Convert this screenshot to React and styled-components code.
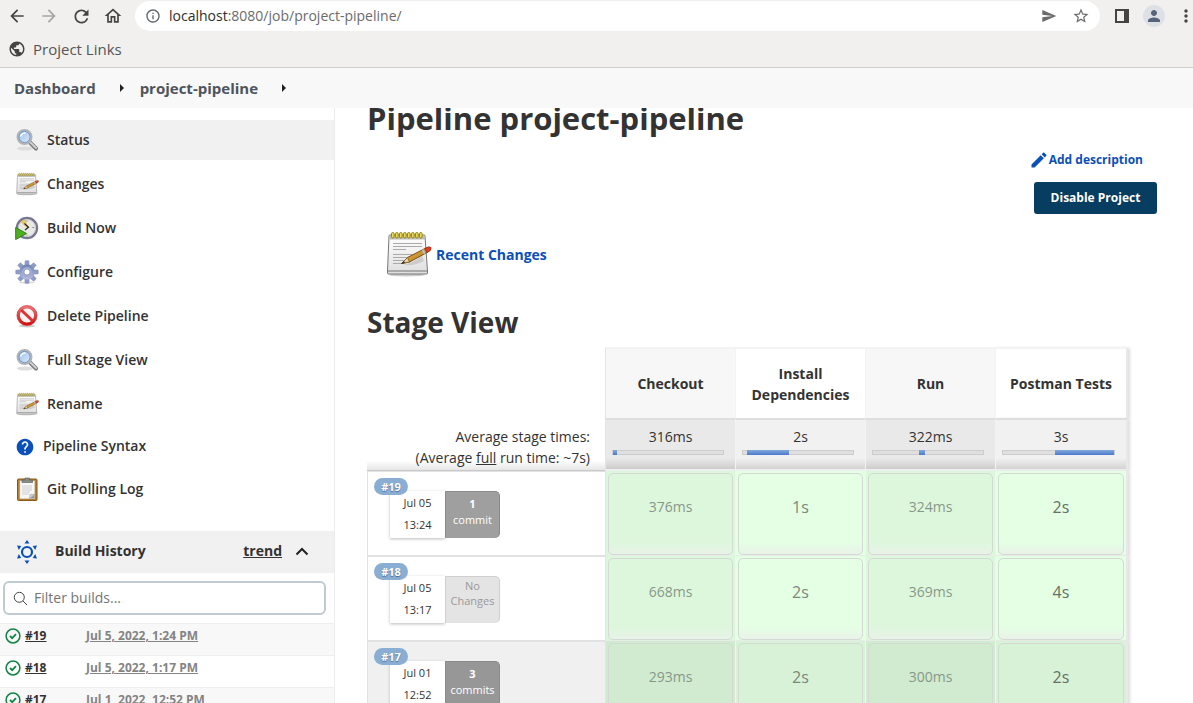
import React from 'react';
import styled, { createGlobalStyle, css } from 'styled-components';
import {
  MdArrowBack,
  MdArrowForward,
  MdRefresh,
  MdOutlineHome,
  MdInfoOutline,
  MdSend,
  MdStarBorder,
  MdPerson,
  MdMoreVert,
  MdPublic,
  MdEdit,
  MdHelp,
} from 'react-icons/md';

const GlobalStyle = createGlobalStyle`
  *, *::before, *::after { box-sizing: border-box; }
  body {
    margin: 0;
    font-family: "Open Sans", "Noto Sans", sans-serif;
    font-size: 14px;
    color: #333;
    background: #fff;
  }
  a { color: inherit; text-decoration: none; }
  button, input { font: inherit; color: inherit; }
  svg { display: block; flex: none; }
`;

const Screen = styled.div`
  display: flex;
  flex-direction: column;
  height: 100vh;
  overflow: hidden;
`;

/* Browser chrome */

const BrowserBar = styled.header`
  flex: none;
  background: #f1f0ee;
  border-bottom: 1px solid #cfcfca;
`;

const Toolbar = styled.div`
  display: flex;
  align-items: center;
  height: 32px;
`;

const NavButtons = styled.nav`
  display: flex;
  flex: none;
  gap: 8px;
  padding: 0 10px 0 5px;
`;

const IconButton = styled.button`
  display: flex;
  align-items: center;
  justify-content: center;
  flex: none;
  width: 24px;
  height: 24px;
  padding: 0;
  border: 0;
  background: none;
  color: ${(p) => (p.$muted ? '#a5a5a3' : p.$soft ? '#6b6b6b' : '#444')};
`;

const AddressBar = styled.div`
  display: flex;
  align-items: center;
  flex: 1;
  gap: 8px;
  height: 30px;
  padding: 0 7px 0 10px;
  border-radius: 15px;
  background: #fff;
  color: #5f6368;
`;

const Url = styled.a`
  flex: 1;
  padding-bottom: 2px;
  font-size: 14px;
  color: #6b6b6b;
  white-space: nowrap;
`;

const Host = styled.span`
  color: #2d2d2d;
`;

const BarActions = styled.div`
  display: flex;
  align-items: center;
  flex: none;
  gap: 9px;
  padding-left: 10px;
  margin-right: -5px;
`;

const Avatar = styled.button`
  display: flex;
  align-items: center;
  justify-content: center;
  width: 22px;
  height: 22px;
  padding: 0;
  border: 0;
  border-radius: 50%;
  background: #dde1e6;
  color: #56637a;
`;

const Bookmarks = styled.div`
  display: flex;
  align-items: center;
  height: 35px;
  padding: 0 8px 2px;
`;

const Bookmark = styled.a`
  display: flex;
  align-items: center;
  gap: 7px;
  font-size: 15px;
  line-height: 18px;
  color: #555;
`;

/* Jenkins page */

const Breadcrumbs = styled.nav`
  display: flex;
  align-items: center;
  flex: none;
  gap: 16px;
  height: 40px;
  padding: 0 14px;
  background: #f8f8f8;
  font-size: 15px;
  font-weight: 700;
  color: #4d545d;
`;

const CrumbArrow = styled.span`
  width: 12px;
  &::before {
    content: '';
    display: block;
    margin-left: 8px;
    width: 0;
    border: solid transparent;
    border-width: 4px 0 4px 4px;
    border-left-color: #222;
  }
`;

const Page = styled.div`
  display: flex;
  flex: 1;
  min-height: 0;
`;

const Sidebar = styled.aside`
  flex: none;
  width: 335px;
  padding-top: 12px;
  border-right: 1px solid #ececec;
`;

const Tasks = styled.nav`
  display: flex;
  flex-direction: column;
  gap: 4px;
  padding-bottom: 22px;
`;

const Task = styled.a`
  display: flex;
  align-items: center;
  gap: 8px;
  height: ${(p) => (p.$small ? '37px' : '40px')};
  padding-left: 15px;
  background: ${(p) => (p.$active ? '#f1f1f1' : 'none')};
  font-size: 14px;
  font-weight: 600;
`;

const TaskLabel = styled.span`
  padding-bottom: 2px;
`;

const HistoryHeader = styled.div`
  display: flex;
  align-items: center;
  height: 42px;
  padding: 0 20px 0 15px;
  background: #f1f1f1;
  font-weight: 700;
`;

const HistoryTitle = styled.span`
  flex: 1;
  padding: 0 0 4px 16px;
`;

const Trend = styled.a`
  padding: 0 8px 4px 0;
  text-decoration: underline;
`;

const FilterBox = styled.label`
  display: flex;
  align-items: center;
  gap: 6px;
  height: 34px;
  margin: 8px 8px 8px 3px;
  padding: 0 8px;
  border: 2px solid #bfcbd0;
  border-radius: 6px;
`;

const FilterInput = styled.input`
  flex: 1;
  min-width: 0;
  padding: 0 0 2px;
  border: 0;
  outline: 0;
  background: none;
  font-size: 14px;
  &::placeholder { color: #757575; opacity: 1; }
`;

const BuildRow = styled.div`
  display: grid;
  grid-template-columns: 20px 61px 1fr;
  height: 32px;
  padding: 4px 0 0 5px;
  border-top: 1px solid #efefef;
  background: ${(p) => (p.$odd ? '#f8f8f8' : '#fff')};
  font-size: 12px;
  font-weight: 700;
  line-height: 16px;
`;

const BuildLink = styled.a`
  color: ${(p) => (p.$soft ? '#848484' : '#333')};
  text-decoration: underline;
`;

const Main = styled.main`
  display: flex;
  flex-direction: column;
  flex: 1;
  min-width: 0;
  overflow: hidden;
  padding: 0 36px 0 32px;
`;

const Title = styled.h1`
  flex: none;
  margin: 0;
  font-size: 31px;
  line-height: 20px;
  font-weight: 700;
`;

const Actions = styled.div`
  display: flex;
  flex-direction: column;
  align-items: flex-end;
  flex: none;
  gap: 12px;
  padding-top: 22px;
`;

const EditLink = styled.a`
  display: flex;
  align-items: center;
  padding-right: 14px;
  font-size: 12px;
  line-height: 20px;
  font-weight: 700;
  color: #0b4fb8;
`;

const DisableButton = styled.button`
  min-width: 123px;
  height: 32px;
  padding: 0 16px 2px;
  border: 0;
  border-radius: 3px;
  background: #073d60;
  color: #fff;
  font-size: 12px;
  font-weight: 700;
`;

const RecentChanges = styled.a`
  display: flex;
  align-items: center;
  flex: none;
  align-self: flex-start;
  gap: 4px;
  margin: 16px 0 0 17px;
  font-weight: 700;
  color: #0b4fb8;
`;

const SectionTitle = styled.h2`
  flex: none;
  margin: 28px 0 9px;
  font-size: 28px;
  line-height: 32px;
  font-weight: 700;
`;

const StageTable = styled.table`
  flex: none;
  align-self: flex-start;
  table-layout: fixed;
  width: 761px;
  border-collapse: separate;
  border-spacing: 0;
  td, th { padding: 0; }
`;

const InfoCol = styled.col`
  width: 238px;
`;

const StageCol = styled.col`
  width: ${(p) => (p.$last ? '133px' : '130px')};
`;

const Corner = styled.td`
  height: 71px;
`;

const stageEdges = css`
  border-left: 1px solid ${(p) => (p.$first ? '#e4e4e4' : '#f3f3f3')};
  ${(p) => p.$last && 'border-right: 2px solid #e8e8e8;'}
  ${(p) => p.$last && 'box-shadow: 2px 1px 3px #ddd;'}
`;

const StageHead = styled.th`
  ${stageEdges}
  height: 71px;
  border-top: 2px solid #f3f3f3;
  background: ${(p) => (p.$odd ? '#f7f7f7' : '#fff')};
  line-height: 21px;
  font-size: 14px;
  font-weight: 700;
`;

const AverageLabel = styled.td`
  height: 53px;
  padding: 5px 15px 0 0 !important;
  border-bottom: 1px solid #c9c9c9;
  background: linear-gradient(#fff 0 82%, #e6e6e6);
  text-align: right;
  line-height: 21px;
  vertical-align: middle;
`;

const AverageCell = styled.td`
  ${stageEdges}
  height: 53px;
  padding-top: 7px !important;
  border-top: 2px solid #dedede;
  border-bottom: 2px solid #eee;
  background: ${(p) => (p.$odd
    ? 'linear-gradient(#e9e9e9 0 78%, #cdcdcd)'
    : 'linear-gradient(#f1f1f1 0 78%, #d3d3d3)')};
  vertical-align: top;
  text-align: center;
  line-height: 19px;
`;

const Track = styled.div`
  display: flex;
  height: 5px;
  margin: 4px 11px 0 6px;
  border: 1px solid #cdcdcd;
  background: #dfdfdf;
`;

const TrackFill = styled.div`
  height: 5px;
  margin-top: -1px;
  background: linear-gradient(#84aad8, #4a79cf);
`;

const RunCell = styled.td`
  height: 85px;
  padding: 6px 0 0 6px !important;
  vertical-align: top;
  border: 1px solid #e2e2e2;
  border-right: 0;
  background: ${(p) => (p.$dim ? '#f0f0f0' : '#fff')};
`;

const RunInfo = styled.div`
  position: relative;
  display: flex;
  width: 126px;
  height: 60px;
  padding: 13px 0 0 16px;
`;

const RunBadge = styled.a`
  position: absolute;
  top: 0;
  left: 0;
  width: 34px;
  height: 17px;
  border-radius: 9px;
  background: #8aaed3;
  color: #fff;
  font-size: 11px;
  line-height: 17px;
  font-weight: 700;
  text-align: center;
  text-shadow: 0 1px 1px #4b6c90;
`;

const RunDate = styled.div`
  width: 55px;
  height: 47px;
  padding-top: 1px;
  background: #fff;
  box-shadow: 0 1px 3px #bbb;
  font-size: 11px;
  line-height: 22px;
  text-align: center;
`;

const Commits = styled.div`
  width: 55px;
  height: 47px;
  padding-top: ${(p) => (p.$none ? '1px' : '4px')};
  border: 1px solid ${(p) => (p.$none ? '#cfcfcf' : '#8b8b8b')};
  border-bottom: 0;
  border-radius: 0 5px 5px 0;
  background: ${(p) => (p.$none ? '#e4e4e4' : p.$dim ? '#979797' : '#9f9f9f')};
  color: ${(p) => (p.$none ? '#999' : '#fff')};
  font-size: 11px;
  line-height: ${(p) => (p.$none ? '15px' : '16px')};
  text-align: center;
`;

const StageCell = styled.td`
  ${stageEdges}
  height: 85px;
  padding: 2px 2px 0 !important;
  border-bottom: 1px solid ${(p) => (p.$dim ? '#d8dcd8' : '#e8ece8')};
  background: ${(p) => p.$bg};
`;

const StageBox = styled.div`
  height: 82px;
  padding-top: 22px;
  border: 1px solid #d3d9d3;
  border-radius: 5px;
  background: ${(p) => (p.$dim ? p.$bg : `linear-gradient(${p.$bg} 85%, #e9f2e9)`)};
  color: ${(p) => p.$tone};
  font-size: ${(p) => (p.$big ? '16px' : '14px')};
  line-height: 22px;
  text-align: center;
`;

/* Icons */

const Magnifier = () => (
  <svg width="24" height="24" viewBox="0 0 24 24">
    <defs>
      <linearGradient id="lens" x1="0" y1="0" x2="1" y2="1">
        <stop offset="0" stopColor="#8fb8ea" />
        <stop offset="1" stopColor="#e6f1fc" />
      </linearGradient>
    </defs>
    <ellipse cx="10" cy="20.500" rx="8" ry="2" fill="#ddd" />
    <path d="M15 14.500 L21 20.500" stroke="#777" strokeWidth="4" strokeLinecap="round" />
    <path d="M15.500 14.500 L21 20" stroke="#d0d0d0" strokeWidth="2" strokeLinecap="round" />
    <circle cx="9.500" cy="9" r="7" fill="url(#lens)" stroke="#b4b4b4" strokeWidth="2" />
    <circle cx="9.500" cy="9" r="5.600" fill="none" stroke="#6f94c9" strokeWidth="1" />
    <path d="M5.500 8.500 Q6.500 5 10.500 5" stroke="#fff" strokeWidth="1.300" fill="none" />
  </svg>
);

const Notepad = ({ size = 24 }) => (
  <svg width={size} height={size} viewBox="0 0 48 48">
    <defs>
      <linearGradient id="paper" x1="0" y1="0" x2="0" y2="1">
        <stop offset="0" stopColor="#fff" />
        <stop offset="1" stopColor="#dedede" />
      </linearGradient>
      <linearGradient id="pencilwood" x1="0" y1="0" x2="1" y2="1">
        <stop offset="0" stopColor="#f0c050" />
        <stop offset="1" stopColor="#a8701c" />
      </linearGradient>
    </defs>
    <ellipse cx="23" cy="45" rx="18" ry="1.500" fill="#ccc" />
    <path d="M6 5 H40 Q41 5 41 6 L43.500 41 V43 Q43.500 44 42.500 44 H4.500 Q3.500 44 3.500 43 V41 L5 6 Q5 5 6 5Z" fill="url(#paper)" stroke="#777" />
    <path d="M6 6 H40.500 L41 9.500 H5.800Z" fill="#bdbdb4" />
    <path d="M4 41 H43" stroke="#aaa" strokeWidth="2" />
    {[9, 13, 17, 21, 25, 29, 33, 37].map((x) => (
      <rect key={x} x={x - 1.500} y="2.500" width="2.600" height="5.500" rx="1.300" fill="#f2dc4a" stroke="#8a7910" strokeWidth=".9" />
    ))}
    <path d="M9 13.500h29M9 16.500h29M9 19.500h13M9 24.500h20M9 27.500h17M9 30.500h12M9 33.500h11" stroke="#aaa" strokeWidth="1" />
    <path d="M19 35 Q30 33 38 25 L40 31 Q32 36 19 35Z" fill="#000" opacity=".12" />
    <path d="M17.500 33.500 L23.500 27.500 L41 18.500 L43 22.500 L25.500 32Z" fill="url(#pencilwood)" stroke="#7a4f16" strokeWidth="1" />
    <path d="M17.500 33.500 L23.500 27.500 L25.500 32Z" fill="#ecd2a0" stroke="#7a5a2a" strokeWidth=".8" />
    <path d="M17 34 l3 -3 .8 1.800Z" fill="#222" />
    <path d="M39.500 19.200 L41.500 23.300 L39.700 24.200 L37.700 20.100Z" fill="#b8c0c8" />
    <path d="M41 18.300 Q45 15.900 47 17.500 Q48 20.500 43 22.700Z" fill="#e8382c" stroke="#932" strokeWidth=".8" />
  </svg>
);

const BuildClock = () => (
  <svg width="24" height="24" viewBox="0 0 24 24">
    <circle cx="12" cy="12" r="10" fill="#e8e8e4" stroke="#77778f" strokeWidth="2.400" />
    <circle cx="12" cy="12" r="8.600" fill="none" stroke="#c9c9d2" strokeWidth=".8" />
    <path d="M12 12 L5.500 6 Q8 3.600 11 3.800Z" fill="#e3c65c" />
    <path d="M9.500 7.500 L13.500 11.200 L10 14" fill="none" stroke="#222" strokeWidth="1.200" />
    <path d="M17.500 11.500h1.600M12 4.500v1M12 18.500v1" stroke="#777" strokeWidth="1" />
    <path d="M.7 11.500 L11.500 17.500 L.7 23.500Z" fill="#4fae22" stroke="#2f8410" strokeWidth="1" />
  </svg>
);

const Gear = () => (
  <svg width="24" height="24" viewBox="0 0 24 24">
    <defs>
      <linearGradient id="gear" x1="0" y1="0" x2="0" y2="1">
        <stop offset="0" stopColor="#6c82b0" />
        <stop offset="1" stopColor="#b9bbe0" />
      </linearGradient>
    </defs>
    <ellipse cx="12" cy="22.500" rx="8" ry="1.200" fill="#ddd" />
    <g stroke="#7080aa" strokeWidth=".5">
      {[0, 45, 90, 135, 180, 225, 270, 315].map((a) => (
        <path key={a} d="M9.800 6 L10.200 .8 H13.800 L14.200 6Z" fill="#8f9dc6" transform={`rotate(${a} 12 12)`} />
      ))}
    </g>
    <circle cx="12" cy="12" r="7.600" fill="url(#gear)" />
    <circle cx="12" cy="12" r="5" fill="#a3add2" />
    <circle cx="12" cy="12" r="3" fill="#fff" stroke="#7080aa" strokeWidth=".6" />
  </svg>
);

const NoEntry = () => (
  <svg width="24" height="24" viewBox="0 0 24 24">
    <defs>
      <linearGradient id="stop" x1="0" y1="0" x2="0" y2="1">
        <stop offset="0" stopColor="#ea7272" />
        <stop offset="1" stopColor="#d01414" />
      </linearGradient>
    </defs>
    <ellipse cx="12" cy="22" rx="8" ry="1.500" fill="#ccc" />
    <circle cx="12" cy="11.500" r="8.600" fill="#f7f3f3" stroke="url(#stop)" strokeWidth="3" />
    <path d="M6.200 6 L17.800 17" stroke="#dc3434" strokeWidth="3" />
    <circle cx="12" cy="11.500" r="10.100" fill="none" stroke="#c33" strokeWidth=".6" />
  </svg>
);

const Clipboard = () => (
  <svg width="24" height="24" viewBox="0 0 24 24">
    <rect x="2.500" y="2" width="19.500" height="21.500" rx="1" fill="#b87f33" stroke="#85591c" />
    <rect x="5" y="4" width="14.500" height="17.500" fill="#f7f7f7" stroke="#ddd" strokeWidth=".6" />
    <path d="M7 9h10M7 11h10M7 13h10M7 15h8M7 17h7" stroke="#ddd" strokeWidth="1.300" />
    <path d="M19.500 17.500 V21.500 H14.500 Z" fill="#999" />
    <path d="M14.500 21.500 L15 17.500 L19.500 17.500Z" fill="#d4d4d4" stroke="#999" strokeWidth=".5" />
    <path d="M7 5.500 V3 H10 V1 H14.500 V3 H17.500 V5.500Z" fill="#858b83" stroke="#5d625b" strokeWidth=".6" />
  </svg>
);

const SunBadge = () => (
  <svg width="24" height="24" viewBox="0 0 24 24" fill="#0b4fb8">
    <circle cx="12" cy="12" r="5" fill="none" stroke="#0b4fb8" strokeWidth="2.200" />
    <path d="M12 0l2.500 3.500h-5zM12 24l2.500 -3.500h-5zM2 5.500l4.300 .4 -2.500 4zM22 5.500l-4.300 .4 2.500 4zM2 18.500l4.300 -.4 -2.500 -4zM22 18.500l-4.300 -.4 2.500 -4z" />
  </svg>
);

const ChevronUp = () => (
  <svg width="24" height="24" viewBox="0 0 24 24" fill="none" stroke="#222" strokeWidth="2">
    <path d="M6.500 14.500 L12 9 L17.500 14.500" />
  </svg>
);

const SearchGlyph = () => (
  <svg width="15" height="15" viewBox="0 0 15 15" fill="none" stroke="#444" strokeWidth="1">
    <circle cx="6.300" cy="6.300" r="5" />
    <path d="M10 10 L14 14" />
  </svg>
);

const Success = () => (
  <svg width="16" height="16" viewBox="0 0 16 16" fill="none" stroke="#138347" strokeWidth="1.500">
    <circle cx="8" cy="8" r="6.900" />
    <path d="M5 8 L7.200 10.200 L11 6.200" strokeWidth="1.800" />
  </svg>
);

const SidePanel = () => (
  <svg width="14" height="14" viewBox="0 0 14 14">
    <path d="M0 0H14V14H0ZM2 2V12H9V2Z" fill="#444" fillRule="evenodd" />
  </svg>
);

/* Data */

const tasks = [
  { label: 'Status', icon: <Magnifier />, active: true },
  { label: 'Changes', icon: <Notepad /> },
  { label: 'Build Now', icon: <BuildClock /> },
  { label: 'Configure', icon: <Gear /> },
  { label: 'Delete Pipeline', icon: <NoEntry /> },
  { label: 'Full Stage View', icon: <Magnifier /> },
  { label: 'Rename', icon: <Notepad /> },
  { label: 'Pipeline Syntax', icon: <MdHelp size={20} color="#0b4fb8" />, small: true },
  { label: 'Git Polling Log', icon: <Clipboard /> },
];

const builds = [
  ['#19', 'Jul 5, 2022, 1:24 PM'],
  ['#18', 'Jul 5, 2022, 1:17 PM'],
  ['#17', 'Jul 1, 2022, 12:52 PM'],
];

const stages = [
  { name: 'Checkout', average: '316ms', start: 0, span: 4 },
  { name: 'Install Dependencies', average: '2s', start: 4, span: 38 },
  { name: 'Run', average: '322ms', start: 42, span: 5 },
  { name: 'Postman Tests', average: '3s', start: 47, span: 54 },
];

const runs = [
  { id: '#19', date: 'Jul 05', time: '13:24', count: 1, noun: 'commit', times: ['376ms', '1s', '324ms', '2s'] },
  { id: '#18', date: 'Jul 05', time: '13:17', count: 0, times: ['668ms', '2s', '369ms', '4s'] },
  { id: '#17', date: 'Jul 01', time: '12:52', count: 3, noun: 'commits', dim: true, times: ['293ms', '2s', '300ms', '2s'] },
];

const stageFill = (odd, dim) => {
  if (dim) return odd ? '#d0ebd0' : '#d8f2d8';
  return odd ? '#ddf7dd' : '#e4ffe4';
};

const tones = ['#88978a', '#7b897b', '#88978a', '#667066'];

export default function App() {
  return (
    <Screen>
      <GlobalStyle />
      <BrowserBar>
        <Toolbar>
          <NavButtons>
            <IconButton aria-label="Back"><MdArrowBack size={20} /></IconButton>
            <IconButton aria-label="Forward" $muted><MdArrowForward size={20} /></IconButton>
            <IconButton aria-label="Reload"><MdRefresh size={21} /></IconButton>
            <IconButton aria-label="Home"><MdOutlineHome size={20} /></IconButton>
          </NavButtons>
          <AddressBar>
            <MdInfoOutline size={16} />
            <Url href="#"><Host>localhost</Host>:8080/job/project-pipeline/</Url>
            <IconButton aria-label="Share" $soft><MdSend size={16} /></IconButton>
            <IconButton aria-label="Bookmark this page" $soft><MdStarBorder size={18} /></IconButton>
          </AddressBar>
          <BarActions>
            <IconButton aria-label="Side panel"><SidePanel /></IconButton>
            <Avatar aria-label="Profile"><MdPerson size={18} /></Avatar>
            <IconButton aria-label="Menu"><MdMoreVert size={20} /></IconButton>
          </BarActions>
        </Toolbar>
        <Bookmarks>
          <Bookmark href="#"><MdPublic size={18} color="#444" />Project Links</Bookmark>
        </Bookmarks>
      </BrowserBar>
      <Breadcrumbs aria-label="Breadcrumb">
        <a href="#">Dashboard</a>
        <CrumbArrow />
        <a href="#">project-pipeline</a>
        <CrumbArrow />
      </Breadcrumbs>
      <Page>
        <Sidebar>
          <Tasks>
            {tasks.map((t) => (
              <Task key={t.label} href="#" $active={t.active} $small={t.small}>
                {t.icon}
                <TaskLabel>{t.label}</TaskLabel>
              </Task>
            ))}
          </Tasks>
          <HistoryHeader>
            <SunBadge />
            <HistoryTitle>Build History</HistoryTitle>
            <Trend href="#">trend</Trend>
            <IconButton aria-label="Collapse build history"><ChevronUp /></IconButton>
          </HistoryHeader>
          <FilterBox>
            <SearchGlyph />
            <FilterInput aria-label="Filter builds" placeholder="Filter builds..." />
          </FilterBox>
          {builds.map(([id, date], i) => (
            <BuildRow key={id} $odd={i % 2 === 0}>
              <Success />
              <span><BuildLink href="#">{id}</BuildLink></span>
              <span><BuildLink href="#" $soft>{date}</BuildLink></span>
            </BuildRow>
          ))}
        </Sidebar>
        <Main>
          <Title>Pipeline project-pipeline</Title>
          <Actions>
            <EditLink href="#"><MdEdit size={20} />Add description</EditLink>
            <DisableButton>Disable Project</DisableButton>
          </Actions>
          <RecentChanges href="#"><Notepad size={48} />Recent Changes</RecentChanges>
          <SectionTitle>Stage View</SectionTitle>
          <StageTable>
            <colgroup>
              <InfoCol />
              {stages.map((s, i) => <StageCol key={s.name} $last={i === 3} />)}
            </colgroup>
            <thead>
              <tr>
                <Corner />
                {stages.map((s, i) => (
                  <StageHead key={s.name} scope="col" $odd={i % 2 === 0} $first={i === 0} $last={i === 3}>
                    {s.name}
                  </StageHead>
                ))}
              </tr>
              <tr>
                <AverageLabel>
                  Average stage times:
                  <br />
                  (Average <u>full</u> run time: ~7s)
                </AverageLabel>
                {stages.map((s, i) => (
                  <AverageCell key={s.name} $odd={i % 2 === 0} $first={i === 0} $last={i === 3}>
                    {s.average}
                    <Track>
                      <TrackFill style={{ marginLeft: `${s.start}%`, width: `${s.span}%` }} />
                    </Track>
                  </AverageCell>
                ))}
              </tr>
            </thead>
            <tbody>
              {runs.map((r) => (
                <tr key={r.id}>
                  <RunCell $dim={r.dim}>
                    <RunInfo>
                      <RunDate>
                        {r.date}
                        <br />
                        {r.time}
                      </RunDate>
                      <Commits $none={!r.count} $dim={r.dim}>
                        {r.count ? <b>{r.count}</b> : 'No'}
                        <br />
                        {r.count ? r.noun : 'Changes'}
                      </Commits>
                      <RunBadge href="#">{r.id}</RunBadge>
                    </RunInfo>
                  </RunCell>
                  {r.times.map((t, i) => (
                    <StageCell
                      key={i}
                      $bg={stageFill(i % 2 === 0, r.dim)}
                      $dim={r.dim}
                      $first={i === 0}
                      $last={i === 3}
                    >
                      <StageBox
                        $bg={stageFill(i % 2 === 0, r.dim)}
                        $dim={r.dim}
                        $big={i % 2 === 1}
                        $tone={tones[i]}
                      >
                        {t}
                      </StageBox>
                    </StageCell>
                  ))}
                </tr>
              ))}
            </tbody>
          </StageTable>
        </Main>
      </Page>
    </Screen>
  );
}
